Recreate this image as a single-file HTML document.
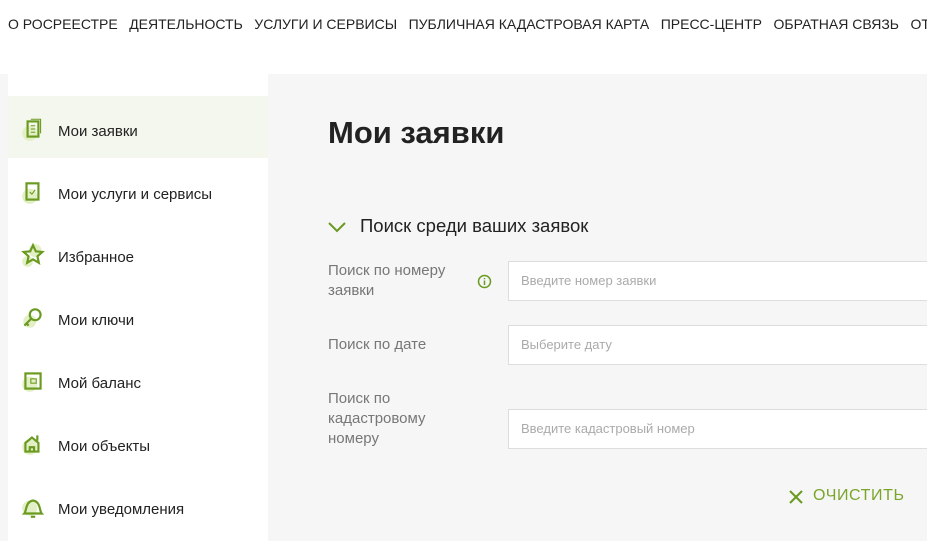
<!DOCTYPE html>
<html><head><meta charset="utf-8">
<style>
*{margin:0;padding:0;box-sizing:border-box}
body{width:927px;height:541px;overflow:hidden;background:#fff;font-family:"Liberation Sans",Arial,sans-serif;position:relative}
.nav{position:absolute;top:16px;left:8px;width:919px;overflow:hidden;white-space:nowrap;font-size:14px;color:#222}
.nav span{margin-right:11.5px}
.lgray{position:absolute;left:0;top:74px;width:8px;height:467px;background:#f6f6f6}
.main{position:absolute;left:268px;top:74px;width:659px;bottom:0;background:#f6f6f6;overflow:hidden}
.side{position:absolute;left:8px;top:74px;width:260px;bottom:0;background:#fff}
.item{position:absolute;left:0;width:260px;height:62px;font-size:15px;color:#222}
.item.act{background:#f4f7ee}
.item svg{position:absolute;left:12px;top:20px}
.item .t{position:absolute;left:50px;top:27px}
h1{position:absolute;left:328px;top:115px;font-size:31px;font-weight:bold;color:#222}
.sec{position:absolute;left:360px;top:215px;font-size:18.5px;color:#222}
.lbl{position:absolute;left:328px;font-size:15px;color:#777;line-height:20px}
.inp{position:absolute;left:240px;width:430px;height:40px;background:#fff;border:1px solid #ddd;font-size:13px;color:#aaa;padding-left:12px;line-height:38px}
.clr{position:absolute;left:813px;top:487px;font-size:16px;color:#7aa52b;letter-spacing:0.6px}
</style></head><body>
<div class="nav"><span>О РОСРЕЕСТРЕ</span><span>ДЕЯТЕЛЬНОСТЬ</span><span>УСЛУГИ И СЕРВИСЫ</span><span>ПУБЛИЧНАЯ КАДАСТРОВАЯ КАРТА</span><span>ПРЕСС-ЦЕНТР</span><span>ОБРАТНАЯ СВЯЗЬ</span><span>ОТКРЫТЫЕ</span></div>
<div class="lgray"></div>
<div class="main">
<div class="inp" style="top:187px">Введите номер заявки</div>
<div class="inp" style="top:251px">Выберите дату</div>
<div class="inp" style="top:335px">Введите кадастровый номер</div>
</div>
<div class="side">
 <div class="item act" style="top:22px"><svg width="26" height="26" viewBox="0 0 24 24"><circle cx="9" cy="16" r="7" fill="#e3f0c6"/><rect x="7" y="5" width="10" height="14" fill="none" stroke="#6a9a1f" stroke-width="2"/><path d="M10 9h4M10 12h4M10 15h4" stroke="#6a9a1f"/><path d="M10 3h9v13" fill="none" stroke="#6a9a1f"/></svg><span class="t">Мои заявки</span></div>
 <div class="item" style="top:85px"><svg width="26" height="26" viewBox="0 0 24 24"><circle cx="9" cy="16" r="7" fill="#e3f0c6"/><rect x="6" y="4" width="11" height="15" fill="none" stroke="#6a9a1f" stroke-width="2"/><path d="M9 12l2 2 3-4" stroke="#6a9a1f" fill="none"/></svg><span class="t">Мои услуги и сервисы</span></div>
 <div class="item" style="top:148px"><svg width="26" height="26" viewBox="0 0 24 24"><circle cx="14" cy="8" r="6" fill="#e3f0c6"/><circle cx="7" cy="18" r="5" fill="#e3f0c6"/><path d="M12 3l2.6 5.6 6 .6-4.5 4 1.3 6L12 16l-5.4 3.2 1.3-6-4.5-4 6-.6z" fill="none" stroke="#6a9a1f" stroke-width="2"/></svg><span class="t">Избранное</span></div>
 <div class="item" style="top:211px"><svg width="26" height="26" viewBox="0 0 24 24"><circle cx="9" cy="15" r="6" fill="#e3f0c6"/><circle cx="14" cy="9" r="5" fill="none" stroke="#6a9a1f" stroke-width="2"/><path d="M10 13l-6 6M6 17l2 2" stroke="#6a9a1f" stroke-width="2"/></svg><span class="t">Мои ключи</span></div>
 <div class="item" style="top:274px"><svg width="26" height="26" viewBox="0 0 24 24"><circle cx="9" cy="15" r="7" fill="#e3f0c6"/><rect x="5" y="5" width="14" height="14" fill="none" stroke="#6a9a1f" stroke-width="2"/><rect x="10" y="10" width="5" height="4" fill="none" stroke="#6a9a1f"/></svg><span class="t">Мой баланс</span></div>
 <div class="item" style="top:337px"><svg width="26" height="26" viewBox="0 0 24 24"><circle cx="9" cy="15" r="7" fill="#e3f0c6"/><path d="M5 19V11l6-5 6 5v8zM9 19v-4h4v4M16 9V4" fill="none" stroke="#6a9a1f" stroke-width="2"/></svg><span class="t">Мои объекты</span></div>
 <div class="item" style="top:400px"><svg width="26" height="26" viewBox="0 0 24 24"><circle cx="9" cy="13" r="7" fill="#e3f0c6"/><path d="M4 18c2-2 1-11 8-12 7 1 6 10 8 12z" fill="none" stroke="#6a9a1f" stroke-width="2"/><path d="M10 21h4" stroke="#6a9a1f" stroke-width="2"/></svg><span class="t">Мои уведомления</span></div>
</div>
<h1>Мои заявки</h1>
<svg style="position:absolute;left:328px;top:221px" width="18" height="12"><path d="M1 2l8 8 8-8" fill="none" stroke="#6a9a1f" stroke-width="2"/></svg>
<div class="sec">Поиск среди ваших заявок</div>
<div class="lbl" style="top:261px">Поиск по номеру<br>заявки</div>
<svg style="position:absolute;left:477px;top:274px" width="15" height="15"><circle cx="7.5" cy="7.5" r="6" fill="none" stroke="#6a9a1f" stroke-width="1.5"/><path d="M7.5 6.5v4.5M7.5 4v1.3" stroke="#6a9a1f" stroke-width="1.5"/></svg>
<div class="lbl" style="top:335px">Поиск по дате</div>
<div class="lbl" style="top:389px">Поиск по<br>кадастровому<br>номеру</div>
<svg style="position:absolute;left:788px;top:489px" width="16" height="16"><path d="M2 2l12 12M14 2L2 14" stroke="#6a9a1f" stroke-width="2"/></svg>
<div class="clr">ОЧИСТИТЬ</div>
</body></html>
